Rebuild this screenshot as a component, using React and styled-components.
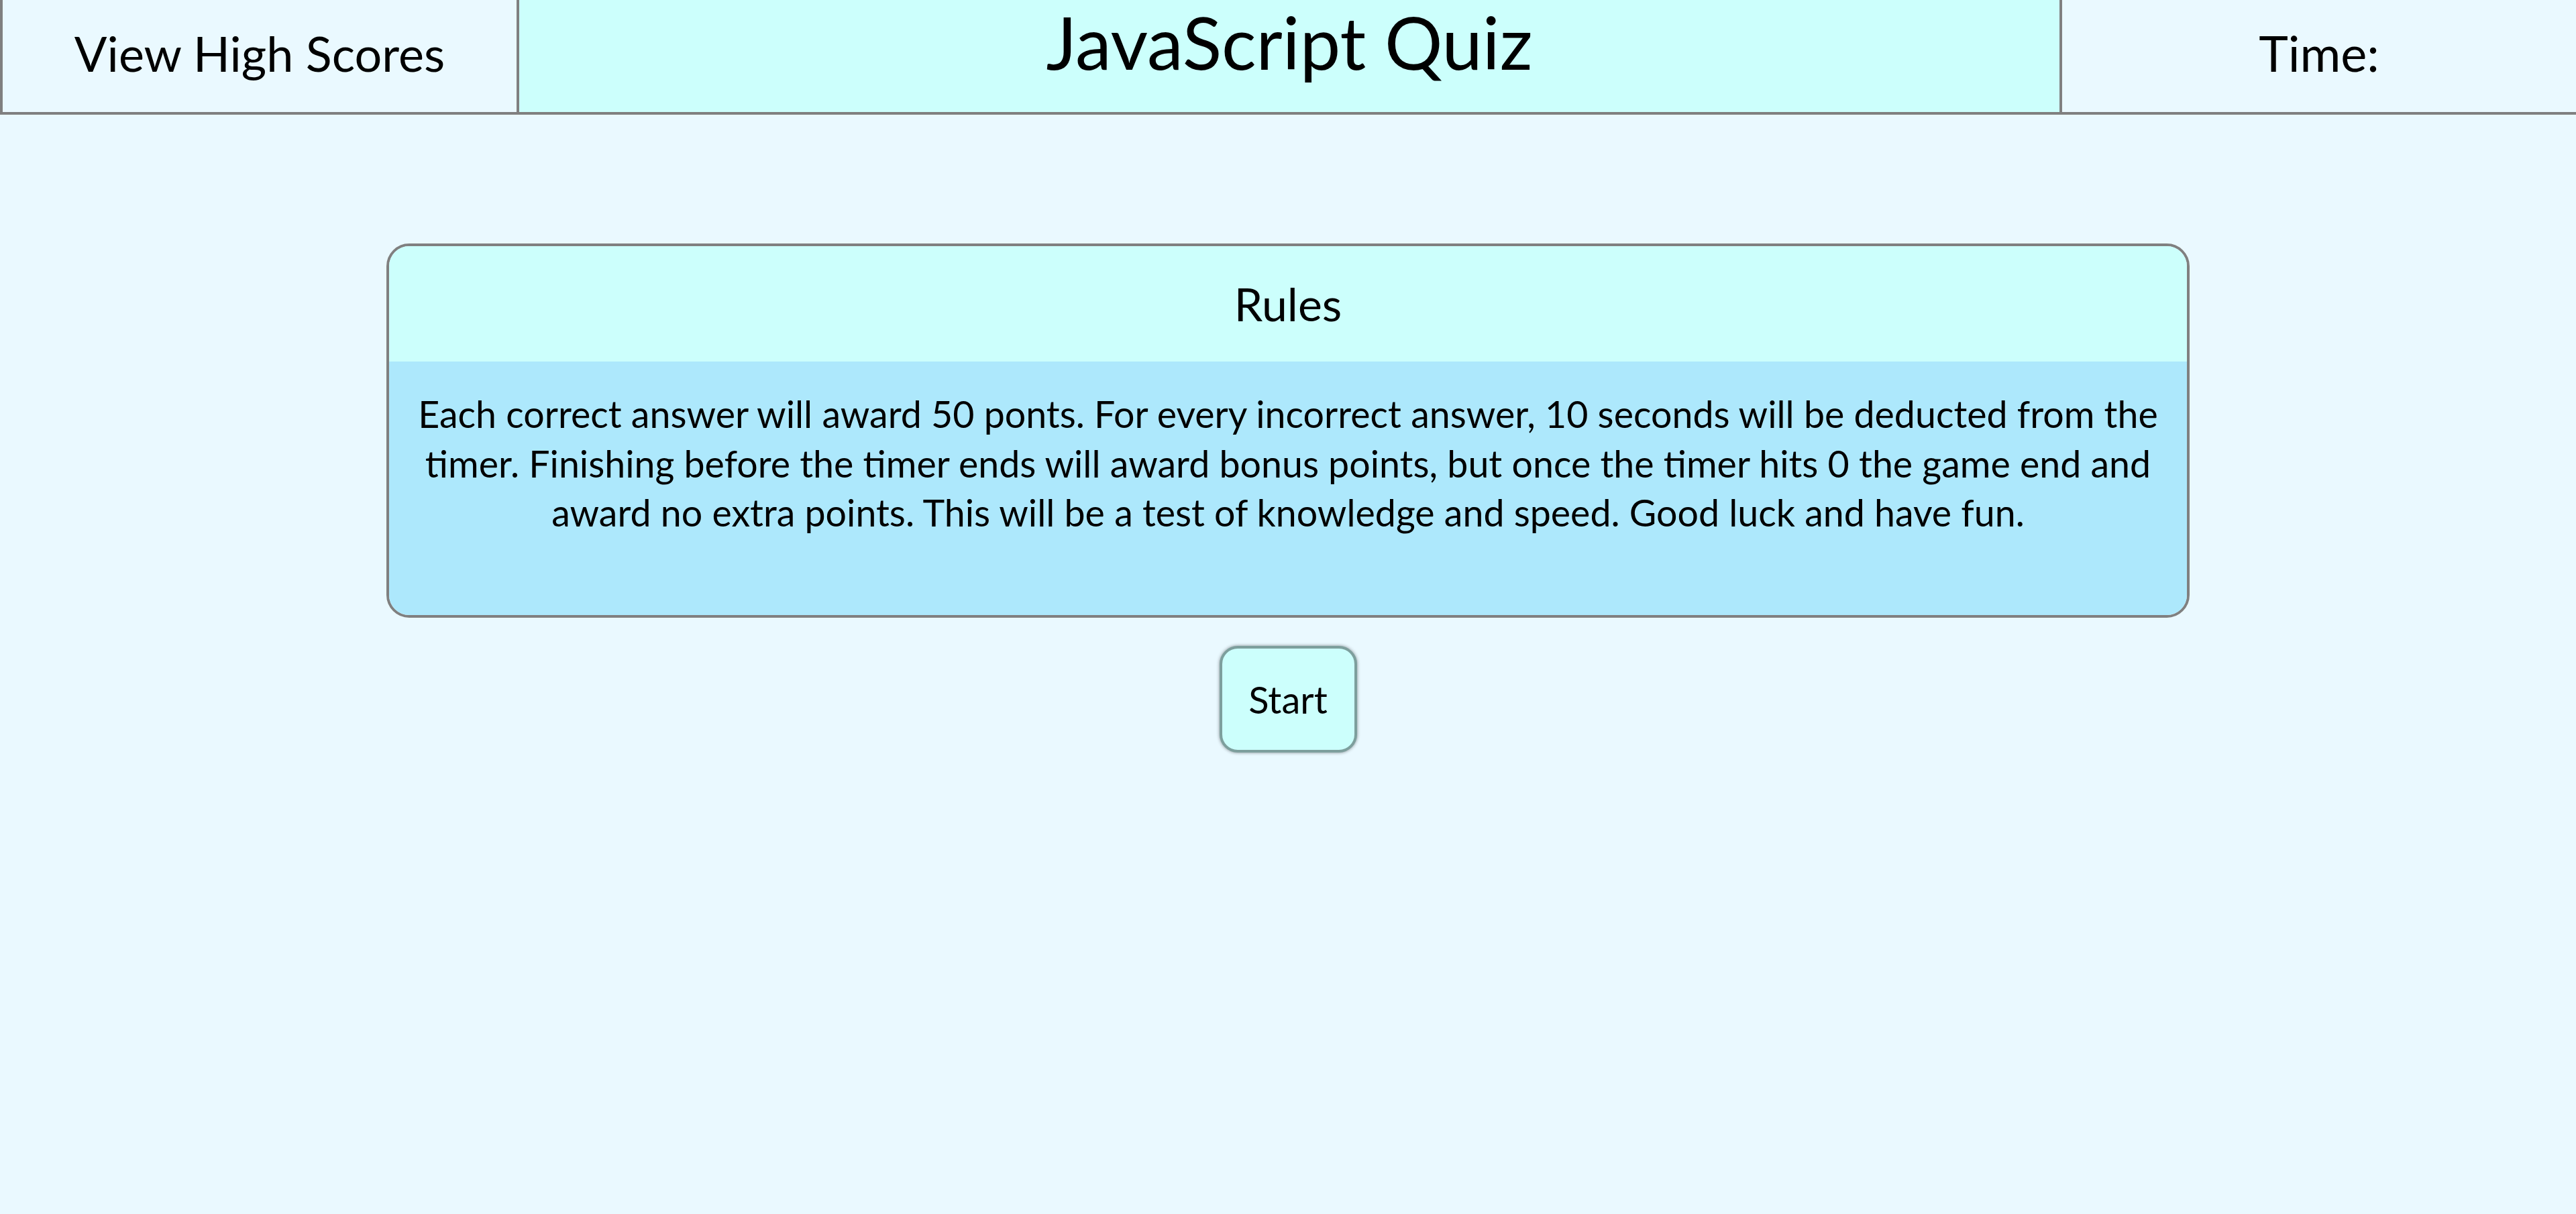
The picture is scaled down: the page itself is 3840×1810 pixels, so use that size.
import React from "react";
import styled, { createGlobalStyle } from "styled-components";

const GlobalStyle = createGlobalStyle`
  html, body {
    margin: 0;
    padding: 0;
    background: #eaf9ff;
    font-family: Lato, "Open Sans", sans-serif;
    color: #000;
  }
  * {
    box-sizing: border-box;
  }
`;

const Page = styled.div`
  min-height: 100vh;
  display: flex;
  flex-direction: column;
  align-items: center;
`;

const Header = styled.header`
  width: 100%;
  display: grid;
  grid-template-columns: 774px 1fr 766px;
  height: 171px;
  border-bottom: 4px solid #808080;
`;

const Cell = styled.div`
  display: flex;
  justify-content: center;
  align-items: ${(p) => (p.$top ? "flex-start" : "center")};
  padding-bottom: ${(p) => (p.$top ? "0" : "10px")};
  background: ${(p) => (p.$accent ? "#ccfffc" : "#eaf9ff")};
  border-left: ${(p) => (p.$first ? "4px solid #808080" : "none")};
  border-right: ${(p) => (p.$last ? "none" : "4px solid #808080")};
`;

const NavLink = styled.a`
  font-size: 72px;
  line-height: 1;
  color: #000;
  text-decoration: none;
  cursor: pointer;
`;

const Title = styled.h1`
  margin: 0;
  padding-top: 8px;
  font-size: 108px;
  font-weight: 400;
  line-height: 1;
`;

const Timer = styled.span`
  font-size: 74px;
  line-height: 1;
`;

const Card = styled.section`
  width: 2688px;
  margin-top: 192px;
  border: 4px solid #808080;
  border-radius: 34px;
  overflow: hidden;
  display: flex;
  flex-direction: column;
`;

const CardHead = styled.div`
  height: 172px;
  background: #ccfffc;
  display: flex;
  align-items: center;
  justify-content: center;
`;

const CardTitle = styled.h2`
  margin: 0;
  font-size: 68px;
  font-weight: 400;
  line-height: 1;
`;

const CardBody = styled.div`
  background: #ade8fc;
  padding: 41px 30px 116px;
`;

const RulesText = styled.p`
  margin: 0;
  font-size: 55.5px;
  line-height: 73.5px;
  text-align: center;
`;

const StartButton = styled.button`
  margin-top: 42px;
  width: 205px;
  height: 159px;
  border: 4px solid #7d9f9d;
  border-radius: 27px;
  background: #ccfffc;
  box-shadow: 0 0 5px rgba(0, 0, 0, 0.45);
  font-family: inherit;
  font-size: 56px;
  color: #000;
  cursor: pointer;
  padding: 0;
`;

const App = () => {
  return (
    <>
      <GlobalStyle />
      <Page>
        <Header>
          <Cell $first>
            <NavLink>View High Scores</NavLink>
          </Cell>
          <Cell $accent $top>
            <Title>JavaScript Quiz</Title>
          </Cell>
          <Cell $last>
            <Timer>Time:</Timer>
          </Cell>
        </Header>
        <Card>
          <CardHead>
            <CardTitle>Rules</CardTitle>
          </CardHead>
          <CardBody>
            <RulesText>
              Each correct answer will award 50 ponts. For every incorrect answer, 10 seconds will be
              deducted from the timer. Finishing before the timer ends will award bonus points, but
              once the timer hits 0 the game end and award no extra points. This will be a test of
              knowledge and speed. Good luck and have fun.
            </RulesText>
          </CardBody>
        </Card>
        <StartButton>Start</StartButton>
      </Page>
    </>
  );
};

export default App;
